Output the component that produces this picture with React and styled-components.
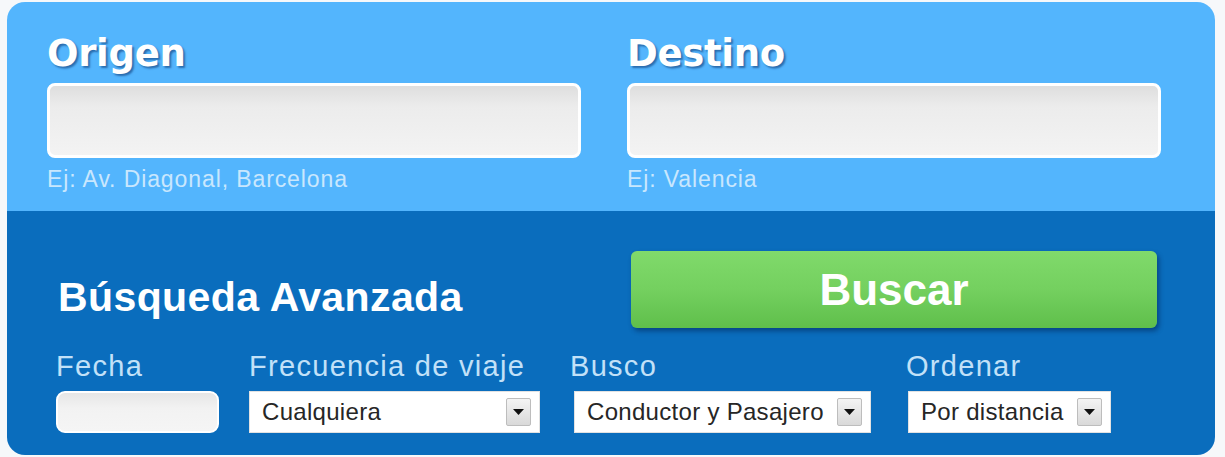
import React from "react";
import styled, { createGlobalStyle } from "styled-components";

const sansFont = `"Liberation Sans", Arial, sans-serif`;
const roundFont = `"DejaVu Sans", Verdana, sans-serif`;

const GlobalStyle = createGlobalStyle`
  html, body {
    margin: 0;
    background: #f6f8fa;
  }
  * {
    box-sizing: border-box;
  }
`;

const Panel = styled.div`
  width: 1208px;
  height: 453px;
  margin: 2px 0 0 7px;
  border-radius: 18px;
  overflow: hidden;
  display: flex;
  flex-direction: column;
`;

const RouteSection = styled.div`
  height: 209px;
  background: #53b5fd;
  padding: 30px 54px 0 40px;
  display: grid;
  grid-template-columns: 1fr 1fr;
  column-gap: 46px;
`;

const RouteColumn = styled.div`
  display: flex;
  flex-direction: column;
`;

const RouteLabel = styled.h2`
  margin: 0;
  font-family: ${roundFont};
  font-weight: bold;
  font-size: 37px;
  line-height: 44px;
  color: #ffffff;
  text-shadow: 2px 2px 2px rgba(10, 50, 110, 0.55);
  letter-spacing: -0.3px;
`;

const PlaceInput = styled.input`
  margin-top: 7px;
  height: 75px;
  width: 100%;
  border: 3px solid #ffffff;
  border-radius: 8px;
  background: linear-gradient(#dedede 0%, #ececec 30%, #f3f3f3 100%);
  outline: none;
  font-family: ${sansFont};
  font-size: 24px;
  padding: 0 14px;
`;

const Hint = styled.div`
  margin-top: 7px;
  font-family: ${sansFont};
  font-size: 23px;
  line-height: 28px;
  letter-spacing: 0.9px;
  color: #c9e7fd;
`;

const AdvancedSection = styled.div`
  flex: 1;
  background: #0a6dbd;
  padding: 40px 58px 0 49px;
`;

const TitleRow = styled.div`
  display: flex;
  align-items: center;
  justify-content: space-between;
`;

const AdvancedTitle = styled.h3`
  margin: 0 0 0 2px;
  padding-top: 14px;
  font-family: ${sansFont};
  font-weight: bold;
  font-size: 41px;
  line-height: 48px;
  letter-spacing: 0.4px;
  color: #ffffff;
`;

const SearchButton = styled.button`
  width: 526px;
  height: 77px;
  border: none;
  border-radius: 6px;
  background: linear-gradient(#80da6b 0%, #74d05f 50%, #5fbf4b 100%);
  box-shadow: 2px 3px 5px rgba(0, 20, 60, 0.45);
  font-family: ${sansFont};
  font-weight: bold;
  font-size: 44px;
  color: #ffffff;
  cursor: pointer;
  padding: 0;
`;

const FieldsRow = styled.div`
  display: flex;
  margin-top: 21px;
`;

const Field = styled.div`
  width: ${(p) => p.$width}px;
  margin-left: ${(p) => p.$offset || 0}px;
  display: flex;
  flex-direction: column;
`;

const FieldLabel = styled.label`
  margin-left: ${(p) => p.$shift || 0}px;
  font-family: ${sansFont};
  font-size: 29px;
  line-height: 34px;
  letter-spacing: 1.3px;
  color: #c2e1f8;
  white-space: nowrap;
`;

const DateInput = styled.input`
  margin-top: 8px;
  height: 42px;
  width: 100%;
  border: 2px solid #ffffff;
  border-radius: 9px;
  background: linear-gradient(#e6e6e6 0%, #f2f2f2 40%, #f5f5f5 100%);
  outline: none;
`;

const SelectBox = styled.div`
  margin-top: 8px;
  height: 42px;
  background: #ffffff;
  border: 1px solid #e2e2e2;
  display: flex;
  align-items: center;
  justify-content: space-between;
  padding: 0 8px 0 12px;
  font-family: ${sansFont};
  font-size: 24px;
  letter-spacing: 0.3px;
  color: #262626;
  white-space: nowrap;
`;

const ArrowButton = styled.span`
  width: 25px;
  height: 28px;
  flex-shrink: 0;
  border: 1px solid #bdbdbd;
  border-radius: 2px;
  background: linear-gradient(#f4f4f4, #d9d9d9);
  display: flex;
  align-items: center;
  justify-content: center;
  margin-left: 6px;
`;

const Select = ({ value }) => (
  <SelectBox>
    <span>{value}</span>
    <ArrowButton>
      <svg width="11" height="6" viewBox="0 0 11 6">
        <path d="M0 0 H11 L5.5 6 Z" fill="#111" />
      </svg>
    </ArrowButton>
  </SelectBox>
);

export default function App() {
  return (
    <>
      <GlobalStyle />
      <Panel>
        <RouteSection>
          <RouteColumn>
            <RouteLabel>Origen</RouteLabel>
            <PlaceInput type="text" />
            <Hint>Ej: Av. Diagonal, Barcelona</Hint>
          </RouteColumn>
          <RouteColumn>
            <RouteLabel>Destino</RouteLabel>
            <PlaceInput type="text" />
            <Hint>Ej: Valencia</Hint>
          </RouteColumn>
        </RouteSection>
        <AdvancedSection>
          <TitleRow>
            <AdvancedTitle>Búsqueda Avanzada</AdvancedTitle>
            <SearchButton>Buscar</SearchButton>
          </TitleRow>
          <FieldsRow>
            <Field $width={163}>
              <FieldLabel>Fecha</FieldLabel>
              <DateInput type="text" />
            </Field>
            <Field $width={291} $offset={30}>
              <FieldLabel>Frecuencia de viaje</FieldLabel>
              <Select value="Cualquiera" />
            </Field>
            <Field $width={297} $offset={34}>
              <FieldLabel $shift={-4}>Busco</FieldLabel>
              <Select value="Conductor y Pasajero" />
            </Field>
            <Field $width={203} $offset={37}>
              <FieldLabel $shift={-2}>Ordenar</FieldLabel>
              <Select value="Por distancia" />
            </Field>
          </FieldsRow>
        </AdvancedSection>
      </Panel>
    </>
  );
}
